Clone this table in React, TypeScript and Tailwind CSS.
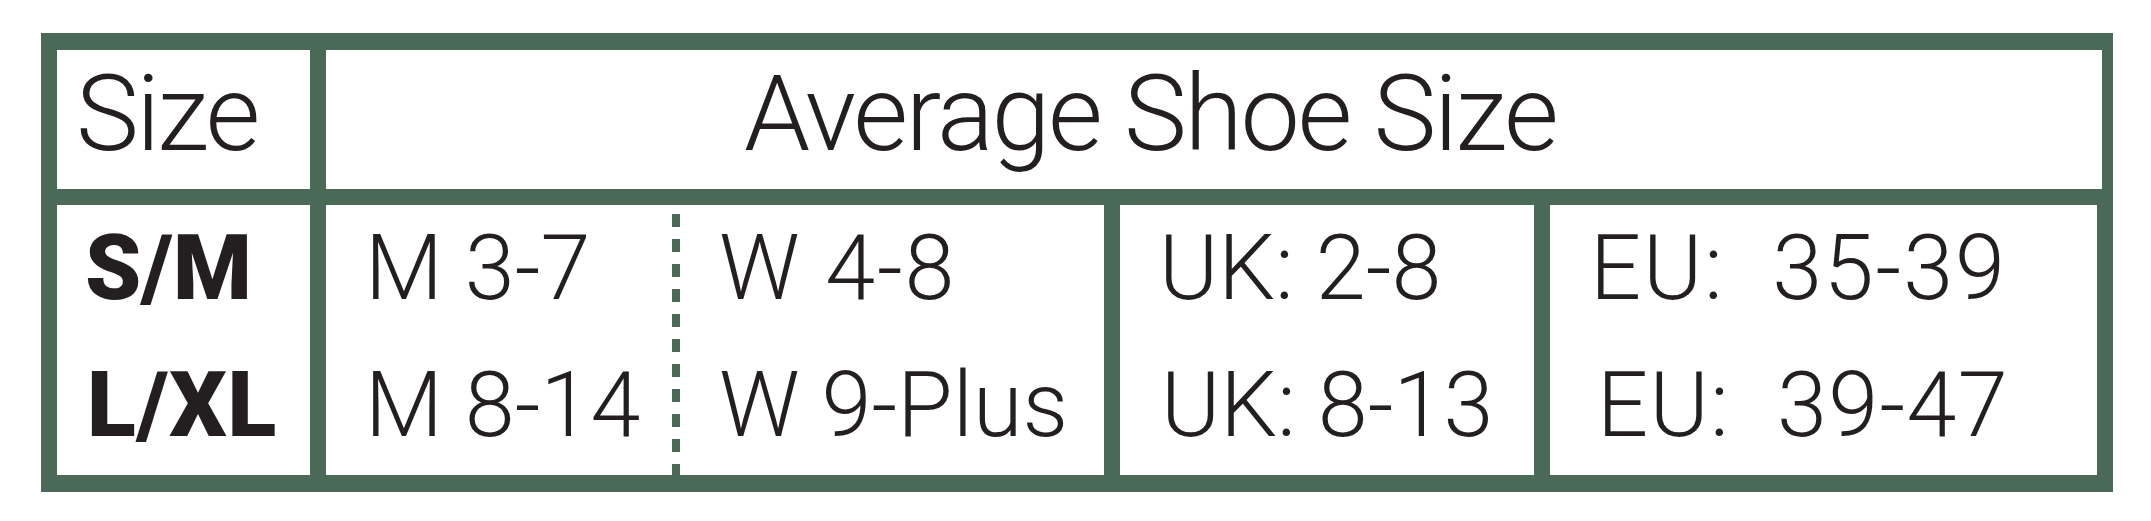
import React from 'react';

const GREEN = 'bg-[#4a6956]';

interface Row {
  m: string;
  w: string;
  uk: string;
  eu: string;
}

const rows: Row[] = [
  { m: 'M 3-7', w: 'W 4-8', uk: 'UK: 2-8', eu: 'EU:  35-39' },
  { m: 'M 8-14', w: 'W 9-Plus', uk: 'UK: 8-13', eu: 'EU:  39-47' },
];

function Cell({ children, className = '' }: { children: React.ReactNode; className?: string }) {
  return <div className={`bg-white flex flex-col ${className}`}>{children}</div>;
}

function Line({ text, className = '' }: { text: string; className?: string }) {
  return (
    <div className={`flex-1 flex items-center whitespace-pre ${className}`}>
      {text}
    </div>
  );
}

export default function App() {
  return (
    <div className="w-[2151px] h-[521px] bg-white pt-[33px] pl-[41px] text-[#231f20] font-['Roboto',sans-serif] font-light">
      <div className={`w-[2072px] h-[459px] ${GREEN} p-[16px] pt-[17px] pb-[17px] flex flex-col gap-[16px]`}>
        {/* Header */}
        <div className="h-[139px] flex gap-[16px]">
          <div className="w-[253px] bg-white flex items-center pl-[19px] text-[106px] leading-none tracking-[-0.025em] pb-[12px]">
            Size
          </div>
          <div className="flex-1 mr-[-5px] bg-white flex items-center pl-[418px] text-[106px] leading-none tracking-[-0.022em] pb-[12px]">
            Average Shoe Size
          </div>
        </div>

        {/* Body */}
        <div className="flex-1 flex gap-[16px] text-[90px] leading-none">
          <Cell className="w-[253px] font-black">
            <Line text="S/M" className="pl-[28px] pb-[10px]" />
            <Line text="L/XL" className="pl-[30px] pb-[6px] tracking-[0.01em]" />
          </Cell>

          <div className="w-[778px] bg-white flex">
            <Cell className="w-[346px]">
              <Line text={rows[0].m} className="pl-[39px] pb-[10px]" />
              <Line text={rows[1].m} className="pl-[39px] pb-[6px]" />
            </Cell>
            <div className="w-[8px] mt-[9px] bg-[repeating-linear-gradient(to_bottom,#4a6956_0px,#4a6956_13px,transparent_13px,transparent_25px)]" />
            <Cell className="flex-1">
              <Line text={rows[0].w} className="pl-[39px] pb-[10px] tracking-[0.02em]" />
              <Line text={rows[1].w} className="pl-[39px] pb-[6px]" />
            </Cell>
          </div>

          <Cell className="w-[414px]">
            <Line text={rows[0].uk} className="pl-[39px] pb-[10px]" />
            <Line text={rows[1].uk} className="pl-[41px] pb-[6px]" />
          </Cell>

          <Cell className="flex-1">
            <Line text={rows[0].eu} className="pl-[40px] pb-[10px] tracking-[0.02em]" />
            <Line text={rows[1].eu} className="pl-[47px] pb-[6px] tracking-[0.015em]" />
          </Cell>
        </div>
      </div>
    </div>
  );
}
